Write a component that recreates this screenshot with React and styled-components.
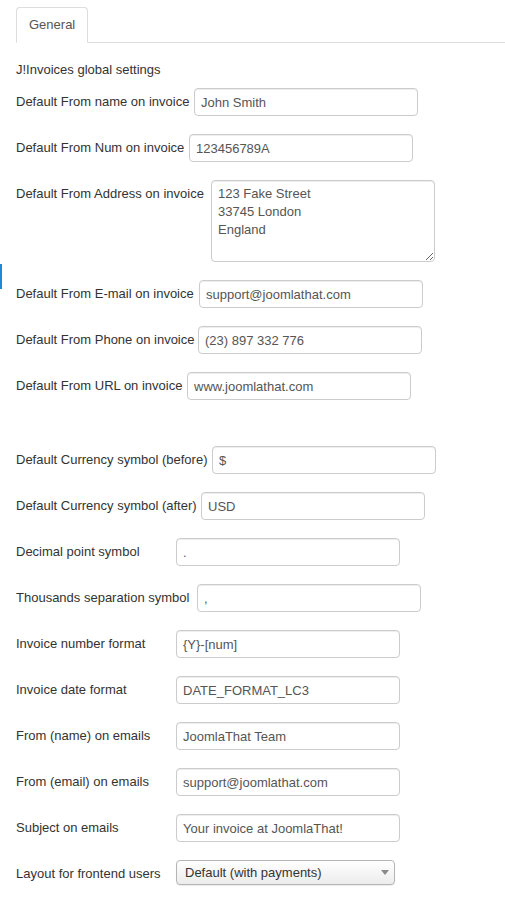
import React from "react";
import styled, { createGlobalStyle } from "styled-components";

const Global = createGlobalStyle`
  html, body { margin: 0; padding: 0; background: #fff; }
  body {
    font-family: "Liberation Sans", Arial, Helvetica, sans-serif;
    font-size: 13px;
    line-height: 18px;
    color: #333;
  }
`;

const Page = styled.div`
  position: relative;
  padding: 7px 0 20px 16px;
`;

const Marker = styled.div`
  position: absolute;
  left: 0;
  top: 264px;
  width: 2px;
  height: 25px;
  background: #1d8ad3;
`;

const TabBar = styled.div`
  display: flex;
  border-bottom: 1px solid #ddd;
`;

const Tab = styled.div`
  padding: 8px 12px;
  line-height: 18px;
  color: #555;
  background: #fff;
  border: 1px solid #ddd;
  border-bottom-color: transparent;
  border-radius: 4px 4px 0 0;
  margin-bottom: -1px;
`;

const Heading = styled.div`
  margin: 18px 0 9px;
  line-height: 18px;
`;

const Row = styled.div`
  display: flex;
  align-items: flex-start;
  margin-bottom: 18px;
`;

const Label = styled.label`
  flex: none;
  width: ${(p) => p.$w}px;
  padding-top: 5px;
  line-height: 18px;
  white-space: nowrap;
  color: #333;
`;

const fieldBase = `
  box-sizing: border-box;
  width: 224px;
  margin: 0;
  padding: 4px 6px;
  font-family: "Liberation Sans", Arial, Helvetica, sans-serif;
  font-size: 13px;
  line-height: 18px;
  color: #555;
  background: #fff;
  border: 1px solid #ccc;
  border-radius: 4px;
  box-shadow: inset 0 1px 1px rgba(0, 0, 0, 0.075);
  outline: none;
`;

const Input = styled.input`
  ${fieldBase}
  height: 28px;
`;

const TextArea = styled.textarea`
  ${fieldBase}
  height: 82px;
  resize: both;
  display: block;
`;

const Spacer = styled.div`
  height: 28px;
`;

const SelectWrap = styled.div`
  position: relative;
  width: 219px;
  height: 25px;
`;

const Select = styled.select`
  box-sizing: border-box;
  width: 100%;
  height: 25px;
  margin: 0;
  padding: 0 24px 0 8px;
  appearance: none;
  -webkit-appearance: none;
  font-family: "Liberation Sans", Arial, Helvetica, sans-serif;
  font-size: 13px;
  color: #333;
  background: linear-gradient(#ffffff, #ececec);
  border: 1px solid #b5b5b5;
  border-radius: 4px;
  box-shadow: 0 1px 1px rgba(0, 0, 0, 0.08);
  outline: none;
`;

const Caret = styled.span`
  position: absolute;
  right: 6px;
  top: 10px;
  width: 0;
  height: 0;
  border-left: 4px solid transparent;
  border-right: 4px solid transparent;
  border-top: 5px solid #8a8a8a;
  pointer-events: none;
`;

const groupA = [
  { label: "Default From name on invoice", value: "John Smith", x: 194 },
  { label: "Default From Num on invoice", value: "123456789A", x: 189 },
];

const groupB = [
  { label: "Default From E-mail on invoice", value: "support@joomlathat.com", x: 199 },
  { label: "Default From Phone on invoice", value: "(23) 897 332 776", x: 198 },
  { label: "Default From URL on invoice", value: "www.joomlathat.com", x: 187 },
];

const groupC = [
  { label: "Default Currency symbol (before)", value: "$", x: 212 },
  { label: "Default Currency symbol (after)", value: "USD", x: 201 },
  { label: "Decimal point symbol", value: ".", x: 176 },
  { label: "Thousands separation symbol", value: ",", x: 197 },
  { label: "Invoice number format", value: "{Y}-[num]", x: 176 },
  { label: "Invoice date format", value: "DATE_FORMAT_LC3", x: 176 },
  { label: "From (name) on emails", value: "JoomlaThat Team", x: 176 },
  { label: "From (email) on emails", value: "support@joomlathat.com", x: 176 },
  { label: "Subject on emails", value: "Your invoice at JoomlaThat!", x: 176 },
];

const Field = ({ label, value, x }) => (
  <Row>
    <Label $w={x - 16}>{label}</Label>
    <Input type="text" value={value} readOnly />
  </Row>
);

export default function App() {
  return (
    <>
      <Global />
      <Page>
        <Marker />
        <TabBar>
          <Tab>General</Tab>
        </TabBar>
        <Heading>J!Invoices global settings</Heading>
        {groupA.map((f) => (
          <Field key={f.label} {...f} />
        ))}
        <Row>
          <Label $w={211 - 16}>Default From Address on invoice</Label>
          <TextArea value={"123 Fake Street\n33745 London\nEngland"} readOnly />
        </Row>
        {groupB.map((f) => (
          <Field key={f.label} {...f} />
        ))}
        <Spacer />
        {groupC.map((f) => (
          <Field key={f.label} {...f} />
        ))}
        <Row>
          <Label $w={176 - 16}>Layout for frontend users</Label>
          <SelectWrap>
            <Select defaultValue="default">
              <option value="default">Default (with payments)</option>
              <option value="simple">Simple</option>
            </Select>
            <Caret />
          </SelectWrap>
        </Row>
      </Page>
    </>
  );
}
